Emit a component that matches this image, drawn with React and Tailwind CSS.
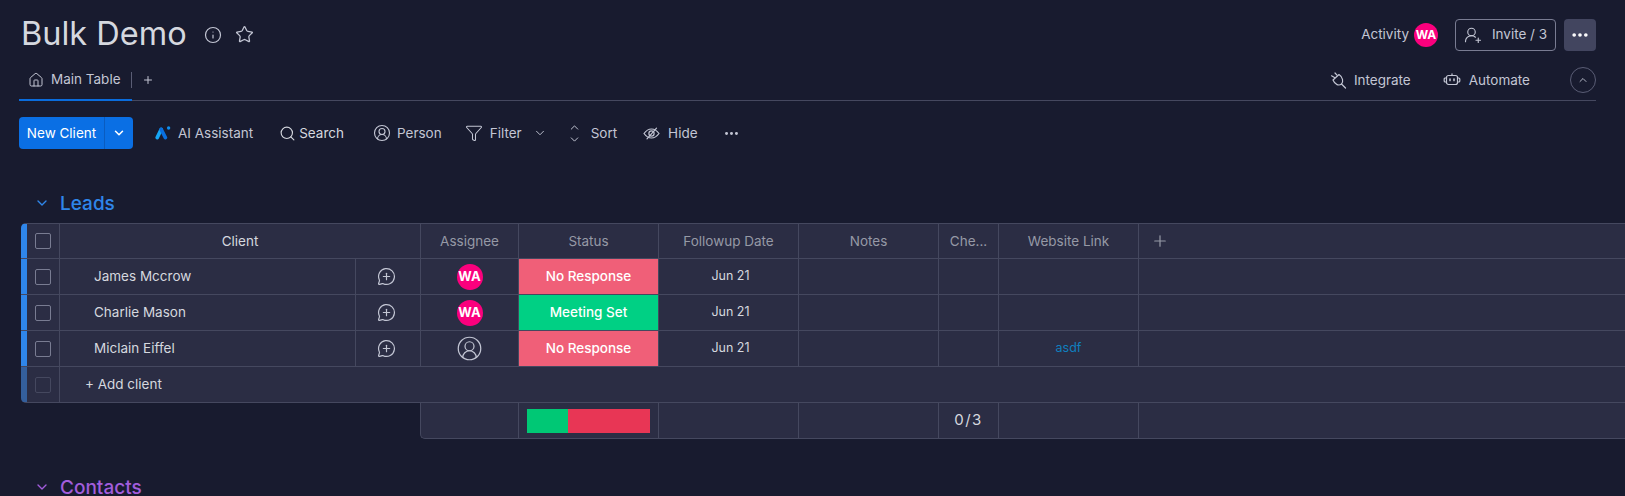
import {
  ChevronDown,
  ChevronUp,
  CircleUserRound,
  Ellipsis,
  Funnel,
  House,
  Info,
  MessageCirclePlus,
  Plus,
  Search,
  Star,
  UserRoundPlus,
} from 'lucide-react'

const rows = [
  { name: 'James Mccrow', avatar: true, status: 'No Response', date: 'Jun 21' },
  { name: 'Charlie Mason', avatar: true, status: 'Meeting Set', date: 'Jun 21' },
  { name: 'Miclain Eiffel', avatar: false, status: 'No Response', date: 'Jun 21', link: 'asdf' },
]

function Avatar({ small }) {
  return (
    <div className={`flex items-center justify-center rounded-full bg-[#fb007d] font-bold text-white ${small ? 'h-6 w-6 text-[12px]' : 'h-[26px] w-[26px] text-[13px]'}`}>
      WA
    </div>
  )
}

function Checkbox({ dim }) {
  return <div className={`h-4 w-4 rounded-[2px] border ${dim ? 'border-[#45485f]' : 'border-[#797c92]'}`} />
}

function AiLogo() {
  return (
    <svg width="16" height="14" viewBox="0 0 16 14" fill="none" strokeLinecap="round">
      <path d="M2.2 11.6 L6.2 3.4" stroke="#16a6f5" strokeWidth="3.6" />
      <path d="M6.2 3.4 L10.4 11.6" stroke="#0a6fe0" strokeWidth="3.6" />
      <circle cx="13.6" cy="2" r="1.7" fill="#0f8ff0" />
    </svg>
  )
}

function HideIcon() {
  return (
    <svg width="17" height="17" viewBox="0 0 17 17" fill="none" stroke="currentColor" strokeWidth="1.2" strokeLinecap="round">
      <path d="M1 8.5 C3.5 5 6 4 8.5 4 C11 4 13.5 5 16 8.5 C13.5 12 11 13 8.5 13 C6 13 3.5 12 1 8.5 Z" />
      <circle cx="8.5" cy="8.5" r="2.6" />
      <path d="M13.5 3.2 L4 13.8" />
    </svg>
  )
}

function PlugIcon() {
  return (
    <svg width="17" height="17" viewBox="0 0 17 17" fill="none" stroke="currentColor" strokeWidth="1.2" strokeLinecap="round" strokeLinejoin="round">
      <path d="M3 8 L9 2.5 C13 5 13.5 10 11.5 12 C9 14 5 13 3 8 Z" />
      <path d="M4.5 5.5 L1.5 3.8 M7 3.2 L5 1 M11.5 12 L15.5 16" />
    </svg>
  )
}

function BotIcon() {
  return (
    <svg width="18" height="18" viewBox="0 0 18 18" fill="none" stroke="currentColor" strokeWidth="1.2" strokeLinecap="round" strokeLinejoin="round">
      <rect x="3.5" y="4.5" width="11" height="9" rx="2" />
      <path d="M3.5 7 H2.2 a1 1 0 0 0-1 1 v2 a1 1 0 0 0 1 1 H3.5 M14.5 7 H15.8 a1 1 0 0 1 1 1 v2 a1 1 0 0 1-1 1 H14.5 M9 4.5 V2.8" />
      <path d="M7 8 V9.6 M11 8 V9.6" strokeWidth="1.6" />
    </svg>
  )
}

function ToolItem({ icon, label, className = '', strong }) {
  return (
    <div className={`flex items-center ${strong ? 'text-[#d5d8df]' : 'text-[#c3c6d4]'} ${className}`}>
      {icon}
      <span>{label}</span>
    </div>
  )
}

function Cell({ className = '', children }) {
  return <div className={`flex shrink-0 items-center justify-center border-r border-[#45485f] ${className}`}>{children}</div>
}

function HeaderCell({ className = '', children }) {
  return <Cell className={`text-[#9699a6] ${className}`}>{children}</Cell>
}

export default function App() {
  return (
    <div className="h-[496px] w-[1625px] overflow-hidden bg-[#181b2f] text-[13.5px] text-[#d5d8df]" style={{ fontFamily: 'Inter, sans-serif' }}>
      {/* Board header */}
      <div className="pl-[19px] pr-[29px] pt-[12px]">
        <div className="flex h-[45px] items-center justify-between">
          <div className="flex items-center">
            <h1 className="ml-[2px] text-[32.5px] font-normal leading-none text-[#d5d8df]">Bulk Demo</h1>
            <Info className="ml-[17px] h-[18px] w-[18px] text-[#c3c6d4]" strokeWidth={1.6} />
            <Star className="ml-[13px] h-[19px] w-[19px] text-[#c3c6d4]" strokeWidth={1.6} />
          </div>
          <div className="flex items-center">
            <span className="text-[#c3c6d4]">Activity</span>
            <div className="ml-[5px]"><Avatar small /></div>
            <div className="ml-[17px] flex h-[32px] w-[101px] items-center justify-center gap-[10px] rounded-[4px] border border-[#797c92] text-[#c3c6d4]">
              <UserRoundPlus className="h-[18px] w-[18px]" strokeWidth={1.5} />
              <span>Invite / 3</span>
            </div>
            <div className="ml-[8px] flex h-[32px] w-[32px] items-center justify-center rounded-[4px] bg-[#42455f]">
              <Ellipsis className="h-[20px] w-[20px] text-white" strokeWidth={2.4} />
            </div>
          </div>
        </div>

        <div className="flex h-[44px] items-stretch justify-between border-b border-[#45485f]">
          <div className="flex items-stretch">
            <div className="-mb-px flex w-[113px] items-center justify-between border-b-2 border-[#0a6cdc] pl-[9px] pt-[3px] text-[#c3c6d4]">
              <div className="flex items-center gap-[7px]">
                <House className="h-[16px] w-[16px]" strokeWidth={1.5} />
                <span>Main Table</span>
              </div>
              <div className="h-4 w-px bg-[#5a5d75]" />
            </div>
            <div className="flex items-center pl-[10px] pt-[3px]">
              <Plus className="h-[12px] w-[12px] text-[#c3c6d4]" strokeWidth={2} />
            </div>
          </div>
          <div className="flex items-center pt-[3px] text-[#c3c6d4]">
            <ToolItem icon={<PlugIcon />} label="Integrate" className="gap-[7px]" />
            <ToolItem icon={<BotIcon />} label="Automate" className="ml-[32px] gap-[8px]" />
            <div className="ml-[40px] flex h-[26px] w-[26px] items-center justify-center rounded-full border border-[#5a5d75]">
              <ChevronUp className="h-[12px] w-[12px]" strokeWidth={1.8} />
            </div>
          </div>
        </div>

        {/* Toolbar */}
        <div className="mt-[16px] flex h-[32px] items-center">
          <div className="flex h-full w-[114px] overflow-hidden rounded-[4px] bg-[#0a6fe4] text-white">
            <div className="flex w-[86px] items-center justify-center border-r border-[#0a5cc0]">New Client</div>
            <div className="flex flex-1 items-center justify-center">
              <ChevronDown className="h-[14px] w-[14px]" strokeWidth={2.6} />
            </div>
          </div>
          <ToolItem icon={<AiLogo />} label="AI Assistant" className="ml-[22px] gap-[7px]" />
          <ToolItem icon={<Search className="h-[17px] w-[17px]" strokeWidth={1.6} />} label="Search" className="ml-[26px] gap-[3px]" strong />
          <ToolItem icon={<CircleUserRound className="h-[18px] w-[18px]" strokeWidth={1.5} />} label="Person" className="ml-[29px] gap-[6px]" />
          <ToolItem icon={<Funnel className="h-[18px] w-[18px]" strokeWidth={1.4} />} label="Filter" className="ml-[23px] gap-[7px]" />
          <ChevronDown className="ml-[11px] h-[14px] w-[14px] text-[#c3c6d4]" strokeWidth={1.6} />
          <div className="ml-[21px] flex flex-col text-[#c3c6d4]">
            <ChevronUp className="-mb-[1px] h-[13px] w-[13px]" strokeWidth={1.8} />
            <ChevronDown className="h-[13px] w-[13px]" strokeWidth={1.8} />
          </div>
          <span className="ml-[10px] text-[#c3c6d4]">Sort</span>
          <ToolItem icon={<HideIcon />} label="Hide" className="ml-[26px] gap-[8px]" />
          <Ellipsis className="ml-[25px] h-[17px] w-[17px] text-[#c3c6d4]" strokeWidth={2.2} />
        </div>
      </div>

      {/* Leads group */}
      <div className="mt-[43px] flex h-[22px] items-center pl-[34px] text-[#2f86ea]">
        <ChevronDown className="h-[16px] w-[16px]" strokeWidth={2} />
        <span className="ml-[10px] text-[19px] font-medium leading-none">Leads</span>
      </div>

      <div className="ml-[21px] mt-[9px]">
        <div className="overflow-hidden rounded-l-[5px] bg-[#2b2d44]">
          {/* Column titles */}
          <div className="flex h-[36px] border-y border-[#45485f]">
            <div className="w-[6px] shrink-0 bg-[#2f86ea]" />
            <Cell className="w-[33px]"><Checkbox /></Cell>
            <Cell className="w-[361px] text-[#d5d8df]">Client</Cell>
            <HeaderCell className="w-[98px]">Assignee</HeaderCell>
            <HeaderCell className="w-[140px]">Status</HeaderCell>
            <HeaderCell className="w-[140px]">Followup Date</HeaderCell>
            <HeaderCell className="w-[140px]">Notes</HeaderCell>
            <HeaderCell className="w-[60px]">Che...</HeaderCell>
            <HeaderCell className="w-[140px]">Website Link</HeaderCell>
            <div className="flex flex-1 items-center pl-[12px]">
              <Plus className="h-[18px] w-[18px] text-[#9699a6]" strokeWidth={1.6} />
            </div>
          </div>

          {rows.map((row) => (
            <div key={row.name} className="flex h-[36px] border-b border-[#45485f]">
              <div className="w-[6px] shrink-0 bg-[#2f86ea]" />
              <Cell className="w-[33px]"><Checkbox /></Cell>
              <Cell className="w-[296px] !justify-start pl-[34px]">{row.name}</Cell>
              <Cell className="w-[65px] pr-[3px]">
                <MessageCirclePlus className="h-[19px] w-[19px] text-[#c3c6d4]" strokeWidth={1.5} />
              </Cell>
              <Cell className="w-[98px]">
                {row.avatar ? <Avatar /> : <CircleUserRound className="h-[27px] w-[27px] text-[#c3c6d4]" strokeWidth={1.1} />}
              </Cell>
              <Cell className={`w-[140px] font-medium text-white ${row.status === 'Meeting Set' ? 'bg-[#00d084]' : 'bg-[#f05f78]'}`}>
                {row.status}
              </Cell>
              <Cell className="w-[140px] pl-[4px] text-[12.5px]">{row.date}</Cell>
              <Cell className="w-[140px]" />
              <Cell className="w-[60px]" />
              <Cell className="w-[140px] text-[12.5px] text-[#0f7fbf]">{row.link}</Cell>
              <div className="flex-1" />
            </div>
          ))}

          <div className="flex h-[36px] border-b border-[#45485f]">
            <div className="w-[6px] shrink-0 bg-[#345f9c]" />
            <Cell className="w-[33px]"><Checkbox dim /></Cell>
            <div className="flex items-center pl-[25px]">+ Add client</div>
          </div>
        </div>

        {/* Summary row */}
        <div className="ml-[399px] flex h-[36px] overflow-hidden rounded-bl-[5px] border-b border-l border-[#45485f] bg-[#2b2d44]">
          <Cell className="w-[98px]" />
          <Cell className="w-[140px]">
            <div className="flex h-[24px] w-[123px]">
              <div className="w-[41px] bg-[#00c875]" />
              <div className="flex-1 bg-[#e83655]" />
            </div>
          </Cell>
          <Cell className="w-[140px]" />
          <Cell className="w-[140px]" />
          <Cell className="w-[60px] text-[15px] tracking-[1.5px]">0/3</Cell>
          <Cell className="w-[140px]" />
          <div className="flex-1" />
        </div>
      </div>

      {/* Contacts group */}
      <div className="mt-[37px] flex h-[22px] items-center pl-[34px] text-[#a25ddc]">
        <ChevronDown className="h-[16px] w-[16px]" strokeWidth={2} />
        <span className="ml-[10px] text-[19px] font-medium leading-none">Contacts</span>
      </div>
    </div>
  )
}
